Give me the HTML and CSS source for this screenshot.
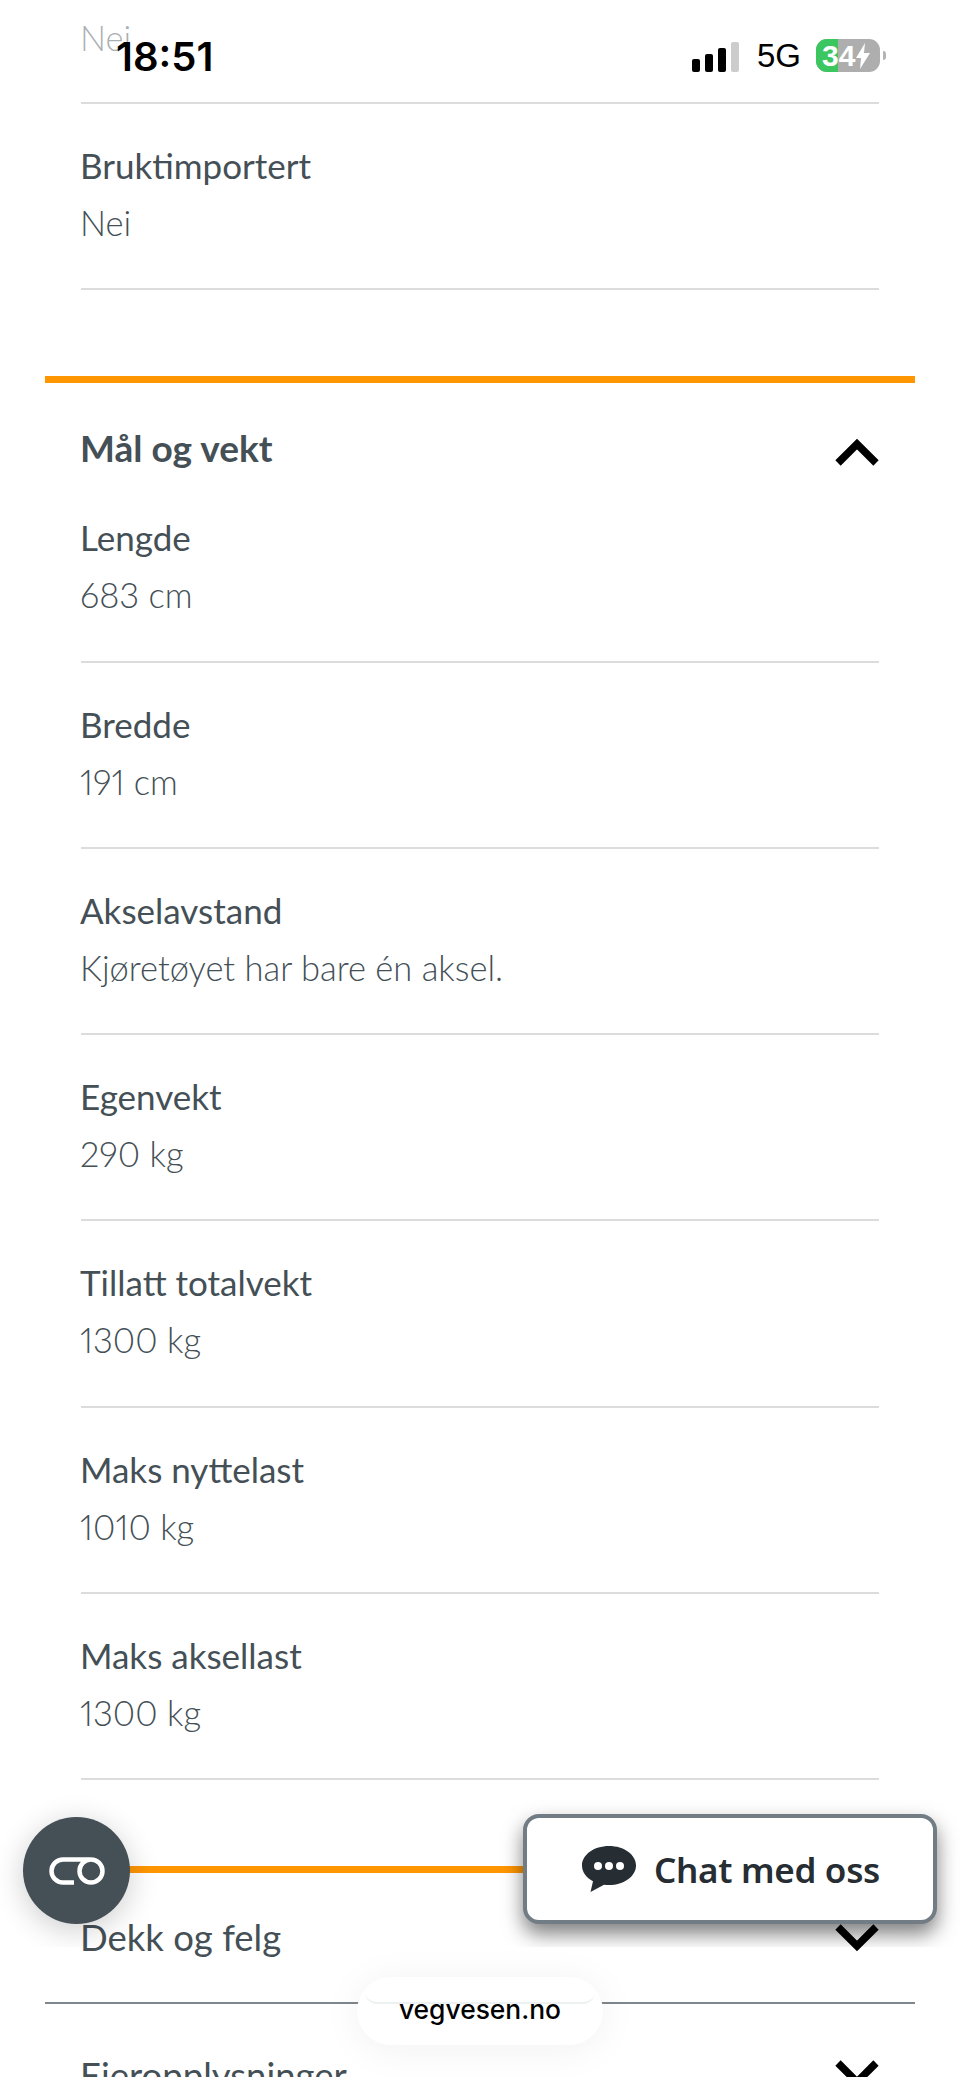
FILE: index.html
```html
<!DOCTYPE html>
<html lang="no">
<head>
    <meta charset="UTF-8">
    <meta name="viewport" content="width=device-width, initial-scale=1.0">
    <title>Kjøretøyopplysninger</title>
    <link rel="stylesheet" href="styles.css">
</head>
<body>
    <div class="page">
        <section class="section section-first">
            <div class="row row-cut">
                <div class="value">Nei</div>
            </div>
            <div class="row">
                <div class="label">Bruktimportert</div>
                <div class="value">Nei</div>
            </div>
        </section>

        <section class="section section-open">
            <div class="section-head">
                <h2>Mål og vekt</h2>
                <svg class="chevron" viewBox="0 0 44 28"><path d="M3 25 22 6l19 19" /></svg>
            </div>
            <div class="row">
                <div class="label">Lengde</div>
                <div class="value">683 cm</div>
            </div>
            <div class="row">
                <div class="label">Bredde</div>
                <div class="value">191 cm</div>
            </div>
            <div class="row">
                <div class="label">Akselavstand</div>
                <div class="value">Kjøretøyet har bare én aksel.</div>
            </div>
            <div class="row">
                <div class="label">Egenvekt</div>
                <div class="value">290 kg</div>
            </div>
            <div class="row">
                <div class="label">Tillatt totalvekt</div>
                <div class="value">1300 kg</div>
            </div>
            <div class="row">
                <div class="label">Maks nyttelast</div>
                <div class="value">1010 kg</div>
            </div>
            <div class="row">
                <div class="label">Maks aksellast</div>
                <div class="value">1300 kg</div>
            </div>
        </section>

        <section class="section section-closed">
            <div class="closed-head">
                <span>Dekk og felg</span>
                <svg class="chevron" viewBox="0 0 44 28"><path d="M3 3l19 19L41 3" /></svg>
            </div>
        </section>
        <section class="section section-last">
            <div class="closed-head">
                <span>Eieropplysninger</span>
                <svg class="chevron" viewBox="0 0 44 28"><path d="M3 3l19 19L41 3" /></svg>
            </div>
        </section>
    </div>

    <div class="status-bar">
        <span class="time">18:51</span>
        <div class="status-icons">
            <div class="signal">
                <i class="bar bar-1"></i>
                <i class="bar bar-2"></i>
                <i class="bar bar-3"></i>
                <i class="bar bar-4"></i>
            </div>
            <span class="network">5G</span>
            <div class="battery">
                <div class="battery-fill"></div>
                <div class="battery-text">34<svg viewBox="0 0 14 26"><path d="M9 0 0 15h5l-1 11 10-16H8z" /></svg></div>
            </div>
            <i class="battery-nub"></i>
        </div>
    </div>

    <div class="floats">
        <button class="round-button">
            <svg viewBox="0 0 56 28"><path d="M25 25.500H14a11.500 11.500 0 0 1 0-23h28a11.500 11.500 0 0 1 0 23 11.500 11.500 0 0 1 0-23" /></svg>
        </button>
        <button class="chat-button">
            <svg viewBox="0 0 54 46"><path d="M27 0C12 0 0 8.800 0 19.500c0 6.500 4.300 12.200 11 15.800L8.500 46 22 38.800c1.600.2 3.300.3 5 .3 15 0 27-8.800 27-19.600S42 0 27 0z" /><circle class="dot" cx="16" cy="20" r="4" /><circle class="dot" cx="27" cy="20" r="4" /><circle class="dot" cx="38" cy="20" r="4" /></svg>
            <span>Chat med oss</span>
        </button>
    </div>

    <div class="url-pill">
        <i class="url-ghost"></i>
        <span>vegvesen.no</span>
    </div>
</body>
</html>
```

FILE: styles.css
```css
* {
    box-sizing: border-box;
}
html, body {
    margin: 0;
    height: 2077px;
    overflow: hidden;
    background: #fff;
}
body {
    position: relative;
    font-family: Lato, "Noto Sans", sans-serif;
    color: #444f56;
}
.section {
    margin: 0 45px;
    padding: 0 36px;
}
.row {
    height: 186.25px;
    padding-top: 32px;
    border-bottom: 2px solid #dcdcdc;
}
.row-cut {
    height: 104px;
    padding-top: 9px;
}
.label,
.value {
    height: 58px;
    line-height: 58px;
    font-size: 34.5px;
    margin-left: -1px;
    font-variant-numeric: proportional-nums;
}
.label {
    font-size: 35px;
}
.value {
    font-weight: 300;
}
.section-open {
    margin-top: 86px;
    border-top: 7px solid #ff9600;
}
.section-head {
    display: flex;
    justify-content: space-between;
    align-items: flex-start;
    height: 93px;
    padding-top: 36px;
}
.section-head h2 {
    margin: 0 0 0 -1px;
    font-size: 37px;
    line-height: 58px;
    font-weight: 700;
}
.chevron {
    width: 44px;
    height: 28px;
    fill: none;
    stroke: #000;
    stroke-width: 7.500;
}
.section-head .chevron {
    margin-top: 19px;
}
.section-closed {
    margin-top: 86px;
    border-top: 7px solid #ff9600;
    height: 138px;
    border-bottom: 2px solid #7f878c;
}
.closed-head {
    display: flex;
    justify-content: space-between;
    font-size: 36.500px;
    line-height: 58px;
}
.closed-head span {
    margin-left: -1px;
}
.section-closed .closed-head {
    padding-top: 35px;
}
.section-closed .closed-head .chevron {
    margin-top: 16px;
}
.section-last .closed-head {
    padding-top: 42px;
}
.section-last .chevron {
    margin-top: 14px;
}
.status-bar {
    position: absolute;
    top: 0;
    left: 0;
    right: 0;
    height: 90px;
    background: rgba(255, 255, 255, 0.55);
    color: #000;
}
.time {
    position: absolute;
    left: 116px;
    top: 34px;
    font-family: Inter, sans-serif;
    font-size: 40px;
    line-height: 46px;
    font-weight: 600;
}
.status-icons {
    position: absolute;
    left: 692px;
    top: 39px;
    display: flex;
    align-items: center;
}
.signal {
    display: flex;
    align-items: flex-end;
    gap: 5px;
    height: 33px;
    padding-top: 3px;
}
.bar {
    width: 8px;
    border-radius: 2px;
    background: #000;
}
.bar-1 { height: 13px; }
.bar-2 { height: 18px; }
.bar-3 { height: 24px; }
.bar-4 { height: 30px; background: #ccc; }
.network {
    width: 59px;
    margin-left: 18px;
    font-family: "Liberation Sans", sans-serif;
    font-size: 33px;
    line-height: 33px;
}
.battery {
    position: relative;
    width: 64px;
    height: 33px;
    border-radius: 11px;
    background: #aeaeae;
    overflow: hidden;
}
.battery-fill {
    width: 22px;
    height: 33px;
    background: #3cc65f;
}
.battery-text {
    position: absolute;
    top: 0;
    left: 6px;
    display: flex;
    align-items: center;
    height: 33px;
    font-family: "Liberation Sans", sans-serif;
    font-weight: 700;
    font-size: 30px;
    color: #fff;
}
.battery-text svg {
    width: 14px;
    height: 26px;
    margin-left: 1px;
    fill: #fff;
}
.battery-nub {
    width: 3px;
    height: 9px;
    margin-left: 3px;
    border-radius: 0 3px 3px 0;
    background: #b4b4b4;
}
.floats {
    position: absolute;
    top: 0;
    left: 0;
    right: 0;
    height: 1947px;
    overflow: hidden;
}
.round-button {
    position: absolute;
    left: 23px;
    top: 1817px;
    width: 107px;
    height: 107px;
    padding: 0;
    border: none;
    border-radius: 50%;
    background: #444f56;
    box-shadow: 0 6px 30px rgba(0, 0, 0, 0.2);
}
.round-button svg {
    display: block;
    width: 56px;
    height: 28px;
    margin: 0 auto;
    fill: none;
    stroke: #fff;
    stroke-width: 4.500;
}
.chat-button {
    position: absolute;
    left: 523px;
    top: 1814px;
    display: flex;
    align-items: center;
    width: 414px;
    height: 110px;
    padding: 0 0 0 55px;
    border: 4px solid #727c84;
    border-radius: 16px;
    background: #fff;
    box-shadow: 0 10px 20px rgba(0, 0, 0, 0.5);
    font-family: "Noto Sans", sans-serif;
    font-size: 35px;
    font-weight: 600;
    letter-spacing: -0.3px;
    color: #262d33;
}
.chat-button svg {
    width: 54px;
    height: 46px;
    margin-right: 18px;
    fill: #262d33;
}
.chat-button .dot {
    fill: #fff;
}
.url-pill {
    position: absolute;
    left: 357px;
    top: 1977px;
    width: 246px;
    height: 68px;
    border-radius: 34px;
    background: #fff;
    box-shadow: 0 4px 40px rgba(0, 0, 0, 0.06);
    text-align: center;
    font-family: Inter, sans-serif;
    font-size: 26.400px;
    font-weight: 500;
    line-height: 64px;
    color: #000;
}
.url-ghost {
    position: absolute;
    left: 8px;
    right: 8px;
    top: 3px;
    height: 24px;
    border-radius: 12px;
    border-bottom: 2px solid #eef1f2;
}
.url-pill span {
    position: relative;
    display: block;
}
```
